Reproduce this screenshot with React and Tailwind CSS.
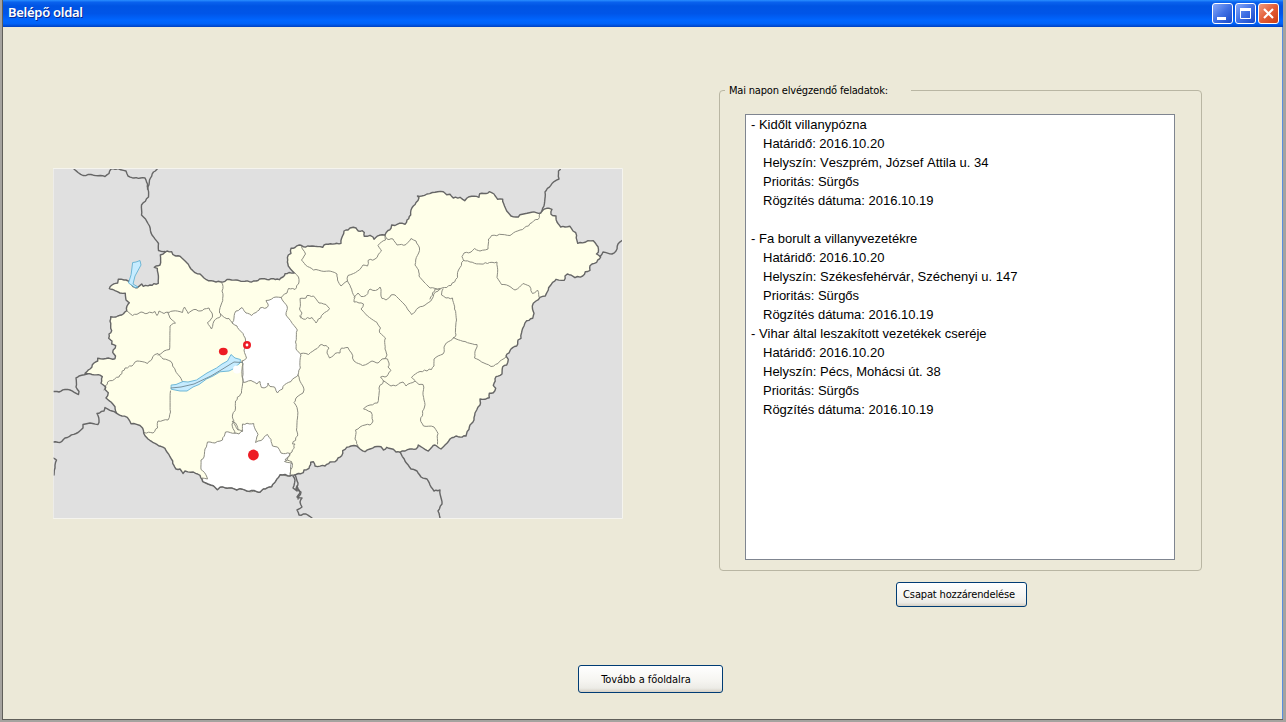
const tasks = [
  { title: "Kidőlt villanypózna", place: "Veszprém, József Attila u. 34", gap: true },
  { title: "Fa borult a villanyvezetékre", place: "Székesfehérvár, Széchenyi u. 147" },
  { title: "Vihar által leszakított vezetékek cseréje", place: "Pécs, Mohácsi út. 38" },
];

// Breaks long border segments into short ones with a small sideways offset.
// The offset depends only on the end points, so shared borders stay aligned.
function wiggle(d, amount) {
  return d
    .split("M")
    .filter((s) => s.trim())
    .map((s) => {
      const closed = s.includes("Z");
      const n = s.replace("Z", "").trim().split(/\s+/).map(Number);
      const pts = [];
      for (let i = 0; i < n.length; i += 2) pts.push([n[i], n[i + 1]]);
      if (closed) pts.push(pts[0]);
      const out = [pts[0]];
      for (let i = 1; i < pts.length; i++) {
        const [ax, ay] = pts[i - 1];
        const [bx, by] = pts[i];
        const len = Math.hypot(bx - ax, by - ay);
        const steps = Math.max(1, Math.round(len / 2.4));
        for (let k = 1; k < steps; k++) {
          const t = k / steps;
          const x = ax + (bx - ax) * t;
          const y = ay + (by - ay) * t;
          const o = Math.sin(x * 1.9 + y * 2.7) * amount;
          out.push([x + (Math.abs(by - ay) / len) * o, y + (Math.abs(bx - ax) / len) * o]);
        }
        out.push([bx, by]);
      }
      return "M" + out.map((p) => p[0].toFixed(1) + " " + p[1].toFixed(1)).join("L") + (closed ? "Z" : "");
    })
    .join("");
}

const COUNTRY = wiggle(
  "M165 252.3 167 251 171.7 251.7 172.7 254.3 176 256 180 256.3 184 260 188.3 264.3 191 269 195 272.7 200 274 204 278 208.3 280.7 214 281.3 220 281.7 225 281.3 227 279.5 231.7 280 236 280 245 281.3 251.7 282 256 281 261.7 278.7 267 279.5 273.3 278.7 279.3 279.7 283 277 285 273.7 289 272.5 294.3 273 290.5 269 288.3 266 287.7 260 288.3 255 291 253.3 291 248.3 295 247.5 299.3 245 303.3 246.7 312 246 322.7 247.3 324 245 328.3 244.3 335 243.8 341 243.3 342.5 236 344 231 348 230 350 228 353.3 227.3 356 228 358.3 231 362.3 230.7 364.3 232.5 364.3 236.3 370 235.3 373 237 374 239.3 379.3 235.3 385 235 388 230.5 391 228.3 391.7 225 395 225.5 399.3 223.3 405 224.3 407 220 410.7 215 412 207.7 416 202.5 419 197.7 417.5 196 421.7 196 427 194 435 192.3 443.3 191.7 446.7 194.7 450 194.3 453.3 198 460 197.3 464.7 200.7 467 198 471.7 196.3 479 197.3 479.7 193.7 486 193.5 489.3 191.7 494 194 497.7 199.3 502.7 199.3 504.5 206 506.7 211 511 216 518.3 217 520 214.7 531.7 212.3 540.7 213 542 211 546.7 208.3 552 209.3 551 214.3 552.5 215.5 556 216 557 222 560.7 227 565 227 570 226.3 573 231 575.7 232.7 577.7 243.3 585 242.3 588 240.7 593.3 240.7 598 246.7 598.3 252.3 596.5 254 600.7 257 596.7 262.3 590 265.7 590 270.3 585.3 271.7 582.7 276 575 277.7 571 275 567.3 274 565 276 564.3 280.3 556 279.3 550 286 548.3 290 545.3 296 540 297.3 536 301 533.3 303.3 532.5 309 534 313.3 532.7 318.3 526.7 320.7 524 326 522.7 328.3 521.5 333 521 338.3 518 340 516.7 346 511 349 510 350.7 506 356 508.3 359.3 506.7 365 502.7 366.7 502 374 496 376.7 493.3 385.3 495.7 388.3 493.3 392.7 489.3 393.3 489.3 397.7 485 399.3 480 399 480 405 476.7 410 475 413 474 420 470 425 466 436 460 437 456 436 450 439 445 445 441 449 435 445 432 447 428.3 451 423 448 418.3 445 416 449 410 449 400 452.3 396 452 393.3 449.3 386.7 447.3 383.3 450 381 446.7 375 446.7 370 449 365 451.7 360 449 356.7 446 351 446 346.7 447.3 342.7 450.7 341.7 455.7 338 458 335 461.7 330 462 326.7 464.3 325 466 315 466 313.3 461.7 310.7 462.3 309 468.3 304 470 303.3 472.7 296 474.5 290 476 285 474.5 280 474.7 276.7 479.3 271.7 486.7 263.3 489 260 492.3 254 490.5 246.7 491 240 488.7 236.7 490 231.7 488 220 487.3 217.3 489.7 213.3 485.7 208 484 202.7 481.7 200 475.3 193.3 472 185 471 183 473.5 180 469 176 469 172.7 463.3 172.7 461 170 456.7 167 452 165 448.3 159 446 153.3 442.7 148 439 145 435.7 142.7 428.3 140 425.5 136.7 424.3 131 423.7 127.3 417.3 122 416 116.7 413.3 115 406.7 111 402 106 398 108.3 392.7 105 389.5 105.7 387 101 383.3 102.3 376.7 98.3 374.7 92 374.5 85 373.3 90 369 94 363 97.7 361 97.7 358.3 106 358.5 115 358.7 115.5 356 112.7 352.3 115.7 345.7 111.7 344 112 341 108.7 338.3 109 334 111.7 330.7 110 321 110.7 316.7 116 317 121.7 315 126.7 310.7 127 306 129.3 302.7 126 300 125.3 293.3 120 293 115 290.7 109.3 288.7 112 285 117.7 283 118.3 279.3 124 280 128.3 281 131 284 133.3 286.7 137.3 287.7 141.7 284 143.3 286.3 150 285 158.3 283.3 157.3 268.3 154.3 267.3 160 265 160.3 255Z",
  0.6
);

const FEJER = wiggle(
  "M240 309 242 307.5 246 313 251.7 315.5 256 312.5 260 308 267 307.5 268 304 266 300.5 271.7 299 276 297 281.3 297.5 283 301 287 306 286 315 294 325.5 297.3 330 295.5 342 296 349 301 355 300.3 368 298 375.3 291 381.5 283 386.5 282.5 389 277.5 393 274.5 387 270 386.5 268 383 266.5 387 261.5 387.5 260 381.5 257 384 251 380.5 243.5 382.5 242 374 243 364 242 361 246.5 358 244 350 245.5 340 243 333.5 239 329.5 237 326 232 323 234 318 236 311Z",
  0.7
);

const BARANYA = wiggle(
  "M242.3 431 242.5 424 253.7 423.5 255.5 430 258 434.5 255.5 442.5 261 440.5 267.5 434.5 271 439.5 272.5 446 277.5 447 281 453 290 453.5 287.5 459.5 284.5 461.5 292.5 463.5 290.5 472 290 476 280 474.7 276.7 479.3 271.7 486.7 263.3 489 260 492.3 246.7 491 240 488.7 236.7 490 231.7 488 220 487.3 217.3 489.7 213.3 485.7 202.7 481.7 202 478 207.5 479 204.5 472.5 201 469.5 201 460 204 457 205 449 207.5 442 215 443 222.5 440 225.5 432 235 433 239 434Z",
  0.6
);

const COUNTIES = [
  "M220.5 281.7 222.5 284 222 291 223 296 221 305 219.5 313 224.5 317.5 229 318.5 232.5 323",
  "M126.7 310.7 132.5 315.5 141 312 147 313.5 155 311.5 157 315.5 159 311 164 313.5 173 311 182.5 312.5 184.5 307 188 313.5 192 310.5 196 309.5 200 311 204 309 209 308 212.5 315 211 319 207.5 322.5 211.5 329 214 321 219.5 317.5 220.5 314",
  "M168 312 170 318 175.5 323 170 326 169.5 349.5 164 351 158 355",
  "M104 390 107.5 382 119 377 125 368 132 366 137 361 147.5 363.5 152 359 155 354.5 158 353.5 163 359 171 361.5 175.5 371 181 378.5 185.5 386.5",
  "M170.5 391 170.5 412 168 420 158 421 157.5 428 153 433 144 432.5",
  "M242 361 242.5 377 241.5 393 240.5 394 235.5 401 235.5 408 232.5 415 234 421 232 424 235 433.5",
  "M238 430 232 421 235.5 423 238 429.5 242.3 431",
  "M281.3 297.5 287 293 288.5 288.5 295 289.5 299 282 298.5 277 295 273",
  "M301.5 246.7 305.5 254 301.5 260 305.5 265 313.5 270 329 271 337 274 337.5 280 341 286 347.5 281 348 275.5 353.5 273.5 361 268 363 265 367.5 266 368 260.5 375 259 381.5 251 378 245.5 385.5 240 385 235",
  "M385 235 387 239 393 239 397 245 406 244.5 411 238.5 416 241 419.5 248 415 265 418.5 270 419 276 424 282 430 288 440 289",
  "M347.5 281 350.5 287 352 291 355 297 354 302 359 303 363.5 304 361 309 367.5 316 377 322.5 380.5 328 379.5 332.5 385.5 338 385 349 387 355 384.5 359",
  "M354 297 358 293 361 296.5 366 295.5 370 289 375.5 290.5 380 287 382 298.5 386 300 391 295 395 295 404 304 411.5 314.5 418 308 427 303.5 432 299 435.5 292 440 289 451 285.5 457.5 277.5 458.5 270 463.5 260.5 462 256.5 464 253 471 252 474.5 248.5 480 251 488 249 488.5 239 491.5 235.5 502 234.5 510 235.5 520 230 528.5 226 534 220.5 538 219.5 540.7 213",
  "M463.5 260.5 470 262 481 264 489.5 262.5 497 262 497 277.5 501.5 284.5 509 286 515 290 523 283.5 529.5 286 532.5 293.5 537.5 290 539 297",
  "M443 289 441.5 295 446 298 452.5 298 454.5 309 456.5 320 456 335 453.5 338",
  "M430 299 435 289 440 288.5",
  "M453.5 337.5 465 341.5 477 344.5 474.5 358 484 363 491 366.5 498 363.5 506 357",
  "M453.5 337.5 445 345 443 354 434 359 434 366 431.5 369.5 420 371.5 411.5 377.5 415 380.5",
  "M301 353.5 308.5 354.5 315 349.5 320 345 326 345.5 329 348 327 353 329.5 358 335 353.5 340 353 341.5 348 348 347.5 351.5 353 354 361 362.5 365.5 368 363.5 372 361 378 363 382 359 387.5 359 389 363 388 367 391 370.5 388 374.5 385 377 380.5 377 383.5 381 391 386 397.5 385 403 382 406 386 415 381 419 384.5 423 384.5 424 400 424.5 407 420.5 420 423.5 426 434 427 438 433.5 437.5 444",
  "M383.5 381 379 388 378.5 398 377.5 403 370 405 363.5 409 371 412 373 421 370 425 365 425 355.5 430 355 439 358 446",
  "M299.5 316 303 319 312 317.5 316 323 323 314 329.5 308.5 326 304.5 319 303 313.5 296 307 295.5 306 298 300 298.5 299.5 309 302 313 301 318",
  "M298 375 304 390 303 393 295.5 399 294 402.5 297 407.5 297.5 418 296.5 430 297.5 436 292.5 444 295 444 292 452 285 460 292 462 290 474",
].map((d) => wiggle(d, 0.7));

const NEIGHBOURS = [
  "M73 168 78 172.5 83 175.5 91 174.5 105 176.5 109 173.5 111 169 117 169M118 168.5 126 171 128 176 134 178 145 178 147.5 184 148.5 197 141.5 205 141.5 215 145.5 219 149.5 226 152 235 158.5 243.5 158.5 250.5 165 251.5",
  "M147.5 189 149.5 180 153.5 172 158 168",
  "M561 168 558.5 171 559 179 552 183.5 545 192 544 206 542 211",
  "M600 256.5 603 252 612 254 616 251 618 244 622 240.5",
  "M53 391.5 59 392 65 389.5 70 390 78.5 394.5 79 391.5 76 387 76 378 79 376 87 374",
  "M53 442 60 442.5 65 438 76 433.5 83 428 83 424.5 90 423 98 424.5 99 420 97 413.5 104 411 105 407.5 116.7 413.3",
  "M53 458 56.5 460 55 468 54 475",
  "M293 476 295 480 293 488 297 491 297 486 300 493 297 497 302 498 300 502 302 507 297 510 299 515 306 514 312 518",
  "M295 475 298 483 296 489 301 492 298 499",
  "M400 452 405 461 411 469 417 471 421 477 427 479 430 485 434 491 440 490 442 504 438 511 440 518",
].map((d) => wiggle(d, 0.5));

function HungaryMap() {
  return (
    <svg viewBox="53 168 570 351" className="block h-[351px] w-[570px]" fill="none" strokeLinejoin="round" strokeLinecap="round">
      <rect x="53" y="168" width="570" height="351" fill="#e0e0e0" />
      <path d={COUNTRY} fill="#ffffe9" />
      <path d={FEJER} fill="#fff" />
      <path d={BARANYA} fill="#fff" />
      <g stroke="#8c8c82" strokeWidth="1">
        <path d={FEJER} />
        <path d={BARANYA} />
        {COUNTIES.map((d) => (
          <path key={d} d={d} />
        ))}
      </g>
      <path d={COUNTRY} stroke="#666" strokeWidth="1.4" />
      <g stroke="#666" strokeWidth="1.4">
        {NEIGHBOURS.map((d) => (
          <path key={d} d={d} />
        ))}
      </g>
      <g fill="#c6ecff" stroke="#62b1d3" strokeWidth="0.9">
        <path d="M133 262.5 136 262 140 260.5 141 265 135 276 133 284 138 287 135 287.5 128.5 283 131 275Z" />
        <path d="M171.5 385 176 384.5 183 381.5 188 382 196.5 380 207 373 216.5 368 222 364 227.5 361 231 354.5 235 358 240.5 359.5 240 363 233 369 229 371 220 371.8 213 376 206.5 379 199 384.5 193 387 187 391 180 391 171.5 389.3Z" />
      </g>
      <circle cx="237" cy="369.5" r="4" fill="#fff" />
      <path d="M171 388 181 387 194 384 211 376 221 370 234 362 242 362.5" stroke="#6f8791" strokeWidth="0.9" />
      <ellipse cx="223.3" cy="351.5" rx="4.4" ry="3.7" fill="#ed1c24" />
      <circle cx="247" cy="345" r="2.7" fill="#fff" stroke="#ed1c24" strokeWidth="2.6" />
      <circle cx="253.4" cy="455" r="5.4" fill="#ed1c24" />
      <rect x="53.5" y="168.5" width="569" height="350" stroke="#f5f4ee" />
    </svg>
  );
}

function CaptionButton({ label, close, children }) {
  return (
    <button
      aria-label={label}
      className={
        "flex h-[21px] w-[21px] items-center justify-center rounded-[3px] border border-white " +
        (close
          ? "bg-linear-to-br from-[#f09a7c] via-[#e35c35] to-[#cc3c10]"
          : "bg-linear-to-br from-[#88a8f8] via-[#4070e4] to-[#1747c8]")
      }
    >
      <svg viewBox="0 0 19 19" className="h-[19px] w-[19px] shrink-0" fill="none" stroke="#fff">
        {children}
      </svg>
    </button>
  );
}

function TitleBar() {
  return (
    <header className="flex h-[27px] shrink-0 items-start justify-between bg-linear-[to_bottom,#2a8fff_0%,#0a62ee_8%,#0054e3_22%,#0055e8_50%,#0066ff_75%,#0062f8_88%,#0040c0_100%] pr-1 pl-[5px]">
      <h1 className="mt-[3px] font-['Noto_Sans',sans-serif] text-[13px] leading-[18px] font-semibold tracking-[-0.28px] text-white [text-shadow:1px_1px_0_#0a2a90]">
        Belépő oldal
      </h1>
      <div className="mt-[3px] flex gap-[2px]">
        <CaptionButton label="Kis méret">
          <path d="M4 14.5h9" strokeWidth="3" />
        </CaptionButton>
        <CaptionButton label="Teljes méret">
          <path d="M4.5 5v9.5h10V5" />
          <path d="M4 5.5h11" strokeWidth="3" />
        </CaptionButton>
        <CaptionButton label="Bezárás" close>
          <path d="M5 5l9 9M14 5l-9 9" strokeWidth="2.2" />
        </CaptionButton>
      </div>
    </header>
  );
}

function XpButton({ className, children }) {
  return (
    <button
      className={
        "rounded-[3px] border border-[#003c74] bg-linear-[to_bottom,#ffffff_0%,#f5f4f0_60%,#ecebe6_85%,#d6d0c5_100%] pt-[2px] font-['DejaVu_Sans_Condensed','DejaVu_Sans',sans-serif] text-[11px] text-black " +
        className
      }
    >
      {children}
    </button>
  );
}

function TaskList() {
  return (
    <div className="h-[446px] w-[430px] border border-[#7f8590] bg-white pl-[5px] font-['Liberation_Sans',Arial,sans-serif] text-[13px] leading-[19px] text-black [font-kerning:none]">
      {tasks.map((t) => (
        <div key={t.title} className={t.gap ? "mb-[19px]" : ""}>
          <p>- {t.title}</p>
          <div className="pl-3">
            <p>Határidő: 2016.10.20</p>
            <p>Helyszín: {t.place}</p>
            <p>Prioritás: Sürgős</p>
            <p>Rögzítés dátuma: 2016.10.19</p>
          </div>
        </div>
      ))}
    </div>
  );
}

export default function App() {
  return (
    <div className="flex h-[722px] w-[1286px] flex-col overflow-hidden bg-[#a5a39f] pr-[3px] pb-[2px] pl-[2px]">
      <div className="flex grow flex-col border-b border-l border-[#605f5a] bg-[#ece9d8]">
        <TitleBar />
        <main className="flex grow flex-col border-r border-[#5a8de0]">
          <div className="flex h-[638px] items-start">
            <div className="mt-[141px] ml-[50px]">
              <HungaryMap />
            </div>
            <section className="mt-[56px] ml-[96px] flex w-[483px] flex-col">
              <fieldset className="h-[488px] rounded-[4px] border border-[#b9b6a3] pl-[5px]">
                <legend className="h-[14px] w-[186px] pl-1 font-['DejaVu_Sans_Condensed','DejaVu_Sans',sans-serif] text-[11px] leading-[16px] tracking-[-0.18px] whitespace-nowrap text-black">
                  Mai napon elvégzendő feladatok:
                </legend>
                <div className="mt-[17px] ml-[20px]">
                  <TaskList />
                </div>
              </fieldset>
              <XpButton className="mt-[11px] ml-[177px] h-[25px] w-[131px] pr-[5px] tracking-[-0.15px]">Csapat hozzárendelése</XpButton>
            </section>
          </div>
          <XpButton className="ml-[575px] h-[28px] w-[145px] pr-[9px] tracking-[-0.05px]">Tovább a főoldalra</XpButton>
        </main>
      </div>
    </div>
  );
}
